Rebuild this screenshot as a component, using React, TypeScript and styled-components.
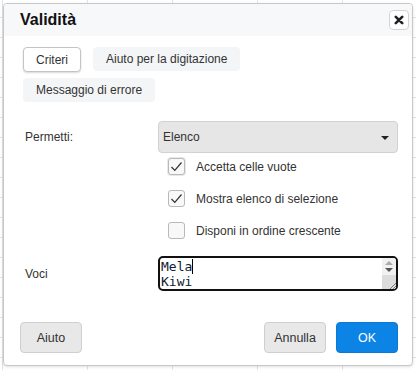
import React from 'react';
import styled, { createGlobalStyle } from 'styled-components';

const GlobalStyle = createGlobalStyle`
  html, body {
    margin: 0;
    padding: 0;
  }
  body {
    width: 416px;
    height: 370px;
    overflow: hidden;
    font-family: "Liberation Sans", Arial, sans-serif;
    background-color: #ffffff;
    background-image:
      linear-gradient(to right, #e3e3e3 1px, transparent 1px),
      linear-gradient(to bottom, #e3e3e3 1px, transparent 1px);
    background-size: 85px 100%, 100% 20px;
    background-position: 2px 0, 0 17px;
  }
`;

const Dialog = styled.div`
  margin: 3px 0 0 3px;
  width: 410px;
  height: 363px;
  box-sizing: border-box;
  background: #ffffff;
  border: 1px solid #c8c8c8;
  border-radius: 4px;
  box-shadow: 0 1px 3px rgba(0, 0, 0, 0.12);
  display: flex;
  flex-direction: column;
  overflow: hidden;
`;

const Header = styled.div`
  height: 32px;
  flex-shrink: 0;
  background: #f7f8fa;
  display: flex;
  align-items: center;
  justify-content: space-between;
  padding: 0 3px 0 16px;
`;

const Title = styled.h1`
  margin: 0;
  font-size: 16px;
  font-weight: 700;
  color: #111111;
`;

const CloseButton = styled.button`
  width: 20px;
  height: 20px;
  padding: 0;
  display: flex;
  align-items: center;
  justify-content: center;
  background: #ffffff;
  border: 1px solid #d4d4d4;
  border-radius: 4px;
  color: #222222;
`;

const Body = styled.div`
  flex: 1;
  display: flex;
  flex-direction: column;
  padding: 11px 14px 12px 19px;
`;

const Tabs = styled.div`
  display: flex;
  flex-wrap: wrap;
  gap: 6px 12px;
  width: 300px;
`;

const Tab = styled.button<{ $active?: boolean }>`
  height: ${({ $active }) => ($active ? '25px' : '24px')};
  padding: 0 12px;
  font-family: inherit;
  font-size: 12px;
  color: #333333;
  border-radius: 4px;
  background: ${({ $active }) => ($active ? '#ffffff' : '#f4f5f7')};
  border: 1px solid ${({ $active }) => ($active ? '#c4c4c4' : '#f4f5f7')};
  box-shadow: ${({ $active }) => ($active ? '0 1px 2px rgba(0,0,0,0.15)' : 'none')};
`;

const Form = styled.div`
  margin-top: 19px;
  display: grid;
  grid-template-columns: 133px 240px;
  padding-left: 2px;
  row-gap: 5px;
`;

const Label = styled.div`
  font-size: 12px;
  color: #333333;
  display: flex;
  align-items: center;
`;

const Select = styled.div`
  height: 32px;
  box-sizing: border-box;
  background: #e6e6e6;
  border: 1px solid #d2d2d2;
  border-radius: 4px;
  display: flex;
  align-items: center;
  justify-content: space-between;
  padding: 0 8px 0 4px;
  font-size: 12px;
  color: #333333;
`;

const Caret = styled.span`
  width: 0;
  height: 0;
  border-left: 4px solid transparent;
  border-right: 4px solid transparent;
  border-top: 4px solid #222222;
  margin-top: 2px;
`;

const Options = styled.div`
  grid-column: 2;
  display: flex;
  flex-direction: column;
  gap: 15px;
  padding-left: 10px;
`;

const OptionRow = styled.label`
  display: flex;
  align-items: center;
  gap: 11px;
  height: 17px;
  font-size: 12px;
  color: #333333;
`;

const Box = styled.span<{ $focused?: boolean }>`
  width: 17px;
  height: 17px;
  box-sizing: border-box;
  border: 1px solid #b9b9b9;
  border-radius: 3px;
  background: #f8f8f8;
  display: flex;
  align-items: center;
  justify-content: center;
  box-shadow: ${({ $focused }) => ($focused ? '0 0 0 1px #e8e8e8' : 'none')};
`;

const EntriesRow = styled.div`
  grid-column: 1 / span 2;
  display: grid;
  grid-template-columns: 133px 240px;
  margin-top: 12px;
`;

const Entries = styled.div`
  height: 35px;
  box-sizing: border-box;
  border: 2px solid #111111;
  border-radius: 5px;
  display: flex;
  overflow: hidden;
`;

const EntriesText = styled.div`
  flex: 1;
  padding: 1px 0 0 1px;
  font-family: "DejaVu Sans Mono", "Liberation Mono", monospace;
  font-size: 13px;
  line-height: 15px;
  color: #0f1a33;
  white-space: pre;
`;

const TextCaret = styled.span`
  display: inline-block;
  width: 1px;
  height: 15px;
  background: #000000;
  vertical-align: top;
`;

const ScrollBar = styled.div`
  width: 14px;
  display: flex;
  flex-direction: column;
  align-items: center;
  background: #f1f1f1;
`;

const ScrollArrow = styled.span<{ $down?: boolean }>`
  margin-top: 3px;
  width: 0;
  height: 0;
  border-left: 4px solid transparent;
  border-right: 4px solid transparent;
  ${({ $down }) => ($down ? 'border-top: 4px solid #555555;' : 'border-bottom: 4px solid #aaaaaa;')}
`;

const ScrollThumb = styled.div`
  margin-top: 3px;
  flex: 1;
  width: 100%;
  background: #dcdcdc;
  display: flex;
  align-items: flex-end;
  justify-content: flex-end;
`;

const Footer = styled.div`
  margin-top: auto;
  margin-left: -3px;
  display: flex;
  align-items: center;
  gap: 10px;
`;

const Spacer = styled.div`
  flex: 1;
`;

const Button = styled.button<{ $primary?: boolean }>`
  width: 62px;
  height: 31px;
  font-family: inherit;
  font-size: 12.5px;
  border-radius: 4px;
  border: 1px solid ${({ $primary }) => ($primary ? '#0b7ad6' : '#cfcfcf')};
  background: ${({ $primary }) => ($primary ? '#0b84e6' : '#e8e8e8')};
  color: ${({ $primary }) => ($primary ? '#ffffff' : '#333333')};
`;

const Check = () => (
  <svg width="13" height="11" viewBox="0 0 13 11">
    <path d="M1.5 6 L4.8 9.3 L11.5 1.5" fill="none" stroke="#333" strokeWidth="1.2" />
  </svg>
);

export default function App() {
  return (
    <>
      <GlobalStyle />
      <Dialog>
        <Header>
          <Title>Validità</Title>
          <CloseButton aria-label="Chiudi">
            <svg width="10" height="10" viewBox="0 0 10 10">
              <path d="M1.8 1.8 L8.2 8.2 M8.2 1.8 L1.8 8.2" stroke="#222" strokeWidth="2.6" strokeLinecap="round" />
            </svg>
          </CloseButton>
        </Header>
        <Body>
          <Tabs>
            <Tab $active>Criteri</Tab>
            <Tab>Aiuto per la digitazione</Tab>
            <Tab>Messaggio di errore</Tab>
          </Tabs>

          <Form>
            <Label>Permetti:</Label>
            <Select>
              Elenco
              <Caret />
            </Select>
            <Options>
              <OptionRow>
                <Box $focused><Check /></Box>
                Accetta celle vuote
              </OptionRow>
              <OptionRow>
                <Box><Check /></Box>
                Mostra elenco di selezione
              </OptionRow>
              <OptionRow>
                <Box />
                Disponi in ordine crescente
              </OptionRow>
            </Options>
            <EntriesRow>
              <Label>Voci</Label>
              <Entries>
                <EntriesText>
                  Mela<TextCaret />{'\n'}Kiwi
                </EntriesText>
                <ScrollBar>
                  <ScrollArrow />
                  <ScrollArrow $down />
                  <ScrollThumb>
                    <svg width="7" height="7" viewBox="0 0 7 7">
                      <path d="M1 7 L7 1 M4 7 L7 4" stroke="#777" strokeWidth="1" />
                    </svg>
                  </ScrollThumb>
                </ScrollBar>
              </Entries>
            </EntriesRow>
          </Form>

          <Footer>
            <Button>Aiuto</Button>
            <Spacer />
            <Button>Annulla</Button>
            <Button $primary>OK</Button>
          </Footer>
        </Body>
      </Dialog>
    </>
  );
}
